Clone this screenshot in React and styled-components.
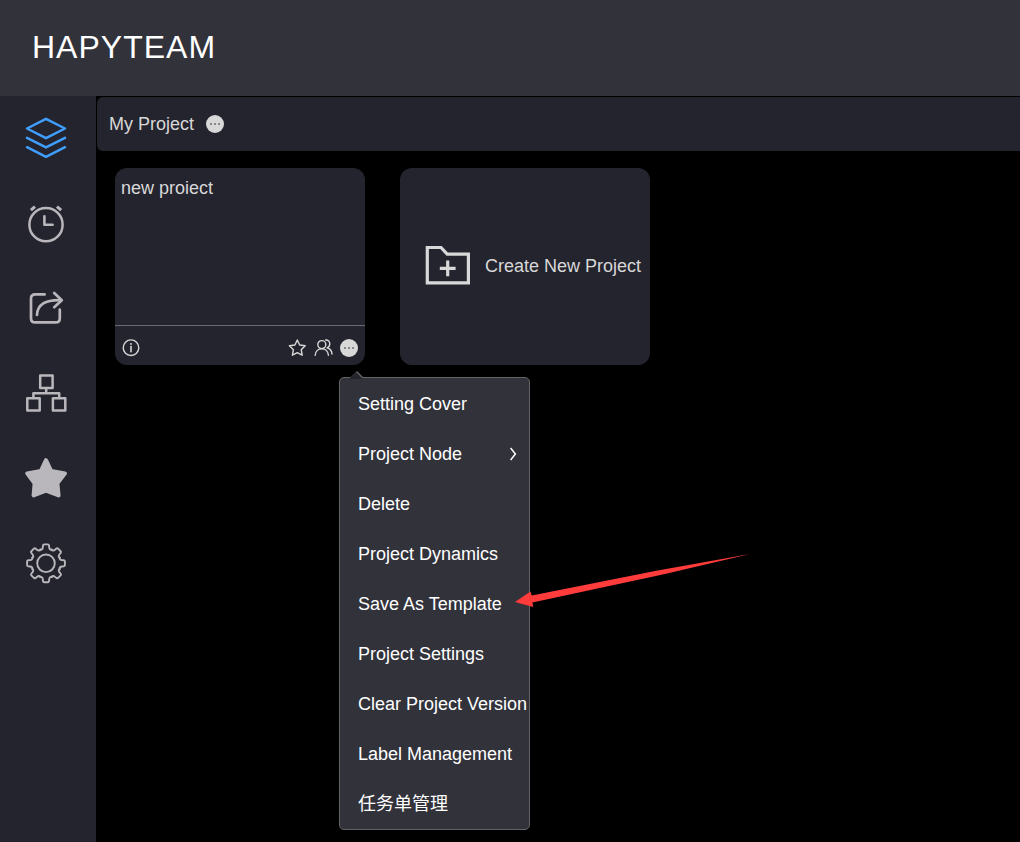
import React from 'react';
// style
import styled, {createGlobalStyle} from 'styled-components';

const menuItems = [
    {name: 'Setting Cover'},
    {name: 'Project Node', hasChildren: true},
    {name: 'Delete'},
    {name: 'Project Dynamics'},
    {name: 'Save As Template', pointed: true},
    {name: 'Project Settings'},
    {name: 'Clear Project Version'},
    {name: 'Label Management'},
    {name: '任务单管理'},
];

// sidebar icons
const LayersIcon = () => (
    <NavSvg viewBox="0 0 45 45" strokeWidth="2.5">
        <path d="M22 2.8 41 12.5 22 22.2 3 12.5Z" />
        <path d="M3 21.8 22 31.4 41 21.8" />
        <path d="M3 31.2 22 40.8 41 31.2" />
    </NavSvg>
);

const ClockIcon = () => (
    <NavSvg viewBox="0 0 45 45" strokeWidth="2.5">
        <circle cx="22" cy="23.7" r="16.6" />
        <path d="M20.4 15.4V23.8H28.6" strokeWidth="2.6" />
        <path d="M6.9 9.2 11 5.6M32.9 5.6 37.2 9.2" strokeWidth="3" strokeLinecap="butt" />
    </NavSvg>
);

const ShareIcon = () => (
    <NavSvg viewBox="0 0 45 45" strokeWidth="2.7">
        <path d="M20.6 8.4H11.2Q7 8.4 7 12.6V32.2Q7 36.4 11.2 36.4H31.6Q35.8 36.4 35.8 32.2V23.6" />
        <path d="M13 29C13.4 18.6 21.4 13.6 37 14.2" />
        <path d="M30.2 7 37.8 14.2 30.2 21.2" />
    </NavSvg>
);

const NodesIcon = () => (
    <NavSvg viewBox="0 0 45 45" strokeWidth="2.5">
        <rect x="16.2" y="4.5" width="12.4" height="12.4" />
        <rect x="3.3" y="27.2" width="12.4" height="12.4" />
        <rect x="28.9" y="27.2" width="12.4" height="12.4" />
        <path d="M22.2 17V22M9.4 27V22.2H35.2V27" />
    </NavSvg>
);

const StarIcon = () => (
    <NavSvg viewBox="0 0 45 45" strokeWidth="4">
        <path
            fill="currentColor"
            d="M22 4.2 27.2 15 41 17.4 33.4 27.4 34.6 39.4 22 34.6 9.6 39.4 10.6 27.4 3.2 17.4 16.8 15Z"
        />
    </NavSvg>
);

const GearIcon = () => (
    <NavSvg viewBox="-22 -22.3 45 45" strokeWidth="1.9">
        <circle r="8.8" />
        {[0, 45, 90, 135, 180, 225, 270, 315].map(angle => (
            <path
                key={angle}
                transform={`rotate(${angle})`}
                d="M-5.7-13.7C-4.2-13.2-3.4-14.4-3.2-16L-3-17.8Q-2.8-18.9-1.8-18.9H1.8Q2.8-18.9 3-17.8L3.2-16C3.4-14.4 4.2-13.2 5.7-13.7"
            />
        ))}
    </NavSvg>
);

const MoreIcon = () => (
    <SmallSvg viewBox="0 0 18 18" stroke="none">
        <circle cx="9" cy="9" r="9" fill="currentColor" />
        <g fill="#24242e">
            <circle cx="5" cy="9" r="0.8" />
            <circle cx="9" cy="9" r="0.8" />
            <circle cx="13" cy="9" r="0.8" />
        </g>
    </SmallSvg>
);

const navItems = [
    {label: 'Projects', icon: <LayersIcon />, active: true},
    {label: 'Schedule', icon: <ClockIcon />},
    {label: 'Share', icon: <ShareIcon />},
    {label: 'Organization', icon: <NodesIcon />},
    {label: 'Favorites', icon: <StarIcon />},
    {label: 'Settings', icon: <GearIcon />},
];

const ProjectMenu = () => (
    <Menu>
        {menuItems.map(item => (
            <MenuRow key={item.name}>
                <MenuButton type="button">
                    {item.name}
                    {item.hasChildren && (
                        <Chevron viewBox="0 0 8 14">
                            <path d="M1.6 1 6.4 7 1.6 13" />
                        </Chevron>
                    )}
                </MenuButton>
                {item.pointed && (
                    <Pointer viewBox="0 0 236 56">
                        <path d="M0 48 15.5 37.5 16.8 41.4 140 17 235 0 150 20 17.4 48.6 18.2 53Z" />
                    </Pointer>
                )}
            </MenuRow>
        ))}
    </Menu>
);

const ProjectCard = ({name}) => (
    <Card>
        <CardTitle>{name}</CardTitle>
        <CardFooter>
            <IconButton type="button" aria-label="Info">
                <SmallSvg viewBox="0 0 18 18">
                    <circle cx="9" cy="8.7" r="7.8" />
                    <path d="M9 7.6V12.8" strokeWidth="1.6" />
                    <path d="M9 4.8V5" strokeWidth="1.8" />
                </SmallSvg>
            </IconButton>
            <CardActions>
                <IconButton type="button" aria-label="Favorite">
                    <SmallSvg viewBox="0 0 18 18">
                        <path d="M9.3 1 11.7 6 17.2 6.8 13.2 10.7 14.2 16.2 9.3 13.6 4.4 16.2 5.4 10.7 1.4 6.8 6.9 6Z" />
                    </SmallSvg>
                </IconButton>
                <IconButton type="button" aria-label="Members">
                    <SmallSvg viewBox="0 0 18 18">
                        <circle cx="7.8" cy="5.6" r="4" />
                        <path d="M1.2 16.2C1.4 12 4.4 9.8 7.8 9.8S14.2 12 14.4 16.2" />
                        <path d="M11.6 1C14.2 0.8 15.8 2.6 15.8 4.8S14.6 8.2 13 8.8C16 9.6 17.8 12 18 15" />
                    </SmallSvg>
                </IconButton>
                <MenuAnchor>
                    <IconButton type="button" aria-label="More" aria-expanded="true">
                        <MoreIcon />
                    </IconButton>
                    <ProjectMenu />
                </MenuAnchor>
            </CardActions>
        </CardFooter>
    </Card>
);

const App = () => {
    return (
        <>
            <GlobalStyle />
            <Page>
                <Header>
                    <Logo>HAPYTEAM</Logo>
                </Header>
                <Body>
                    <Sidebar>
                        {navItems.map(item => (
                            <NavLink key={item.label} href="#" aria-label={item.label} $active={item.active}>
                                {item.icon}
                            </NavLink>
                        ))}
                    </Sidebar>
                    <Main>
                        <TitleBar>
                            <Title>My Project</Title>
                            <IconButton type="button" aria-label="More">
                                <MoreIcon />
                            </IconButton>
                        </TitleBar>
                        <Cards>
                            <ProjectCard name="new proiect" />
                            <CreateCard type="button">
                                <FolderSvg viewBox="0 0 46 41">
                                    <path d="M2.3 2.5H16L22.2 9.2H43.4V37.8H2.3Z" />
                                    <path d="M14.8 23.3H30.6M22.7 15.4V31.2" />
                                </FolderSvg>
                                Create New Project
                            </CreateCard>
                        </Cards>
                    </Main>
                </Body>
            </Page>
        </>
    );
};

const GlobalStyle = createGlobalStyle`
    * {
        box-sizing: border-box;
    }
    body {
        margin: 0;
        background: #000;
        font-family: "Liberation Sans", Arial, "Noto Sans CJK SC", sans-serif;
        font-size: 18px;
        line-height: 20px;
        color: #d8d8d8;
    }
    button {
        padding: 0;
        border: none;
        background: none;
        color: inherit;
        font: inherit;
        cursor: pointer;
    }
`;

const Page = styled.div`
    min-height: 100vh;
    display: flex;
    flex-direction: column;
`;

const Header = styled.header`
    height: 96px;
    padding: 0 32px 2px;
    display: flex;
    align-items: center;
    background: #32323b;
`;

const Logo = styled.h1`
    margin: 0;
    font-size: 32px;
    font-weight: 400;
    line-height: 36px;
    letter-spacing: 1px;
    color: #fff;
`;

const Body = styled.div`
    flex: 1;
    display: flex;
`;

const Sidebar = styled.nav`
    flex: none;
    width: 96px;
    background: #24242e;
`;

const NavLink = styled.a`
    height: 85px;
    padding-right: 3px;
    display: flex;
    align-items: center;
    justify-content: center;
    color: ${({$active}) => ($active ? '#409eff' : '#b9b7bc')};
`;

const Svg = styled.svg`
    display: block;
    flex: none;
    fill: none;
    stroke: currentColor;
    overflow: visible;
`;

const NavSvg = styled.svg.attrs({
    fill: 'none',
    stroke: 'currentColor',
    strokeLinecap: 'round',
    strokeLinejoin: 'round',
})`
    display: block;
    width: 45px;
    height: 45px;
`;

const SmallSvg = styled(Svg)`
    width: 18px;
    height: 18px;
    stroke-width: ${({stroke}) => (stroke === 'none' ? 0 : '1.4px')};
    stroke-linecap: round;
    stroke-linejoin: round;
`;

const FolderSvg = styled(Svg)`
    width: 46px;
    height: 41px;
    stroke-width: 3.2px;
`;

const Main = styled.main`
    flex: 1;
    min-width: 0;
    padding: 1px 0 0 1px;
`;

const TitleBar = styled.div`
    height: 54px;
    padding: 0 12px;
    display: flex;
    align-items: center;
    gap: 12px;
    border-radius: 6px 0 0 6px;
    background: #24242e;
`;

const Title = styled.h2`
    margin: 0;
    font-size: 18px;
    font-weight: 400;
`;

const Cards = styled.div`
    padding: 17px 18px;
    display: flex;
    flex-wrap: wrap;
    gap: 35px;
`;

const Card = styled.article`
    width: 250px;
    height: 197px;
    display: flex;
    flex-direction: column;
    border-radius: 12px;
    background: #24242e;
`;

const CardTitle = styled.h3`
    flex: 1;
    margin: 0;
    padding: 10px 6px;
    font-size: 18px;
    font-weight: 400;
`;

const CardFooter = styled.footer`
    padding: 13px 7px 8px;
    display: flex;
    justify-content: space-between;
    border-top: 1px solid #6b6b6d;
`;

const CardActions = styled.div`
    display: flex;
    gap: 8px;
`;

const IconButton = styled.button`
    display: block;
    width: 18px;
    height: 18px;
`;

const CreateCard = styled.button`
    && {
        width: 250px;
        height: 197px;
        padding: 0 8px 2px 25px;
        display: flex;
        align-items: center;
        gap: 14px;
        border-radius: 12px;
        background: #24242e;
        white-space: nowrap;
    }
`;

const MenuAnchor = styled.div`
    position: relative;
`;

const Menu = styled.ul`
    position: absolute;
    top: 38px;
    left: -1px;
    z-index: 10;
    width: max-content;
    min-width: 191px;
    margin: 0;
    padding: 1px 0 0;
    list-style: none;
    border: 1px solid #636366;
    border-radius: 5px;
    background: #32323b;
    color: #fff;
    /* little caret under the "more" button */
    &::before,
    &::after {
        content: "";
        position: absolute;
        top: -7px;
        left: 10px;
        border: 7px solid transparent;
        border-top: none;
        border-bottom-color: #636366;
    }
    &::after {
        top: -6px;
        left: 9px;
        border-bottom-color: #24242e;
    }
`;

const MenuRow = styled.li`
    position: relative;
`;

const MenuButton = styled.button`
    && {
        width: 100%;
        height: 50px;
        padding: 0 2px 0 18px;
        display: flex;
        align-items: center;
        justify-content: space-between;
        white-space: nowrap;
    }
`;

const Chevron = styled(Svg)`
    width: 8px;
    height: 14px;
    margin-right: 10px;
    stroke-width: 1.5px;
`;

const Pointer = styled(Svg)`
    position: absolute;
    top: -25px;
    left: 175px;
    width: 236px;
    height: 56px;
    fill: #ff3b3b;
    stroke: none;
    pointer-events: none;
`;

export default App;
